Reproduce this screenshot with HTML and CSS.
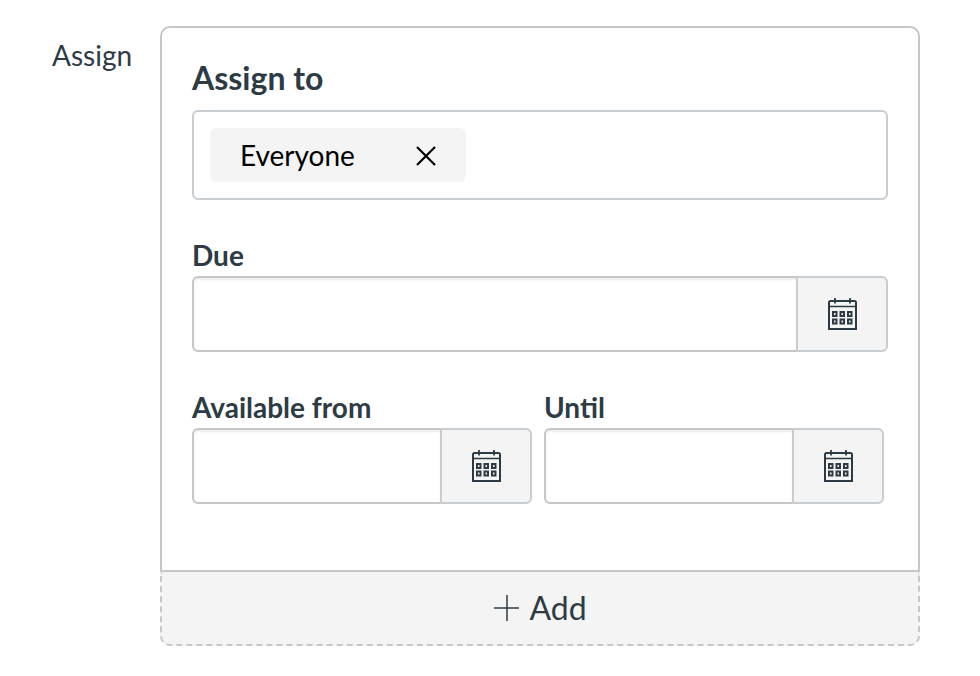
FILE: index.html
```html
<!DOCTYPE html>
<html lang="en">
<head>
    <meta charset="UTF-8">
    <meta name="viewport" content="width=device-width, initial-scale=1.0">
    <title>Assign</title>
    <link rel="stylesheet" href="styles.css">
</head>
<body>
    <svg class="sprite" aria-hidden="true">
        <symbol id="calendar" viewBox="0 0 30 32">
            <g fill="none" stroke="currentColor" stroke-width="2">
                <path d="M2 31V4.500Q2 3 3.500 3H27.500Q29 3 29 4.500V31Z"/>
                <path d="M2 8.500H29" stroke-width="1.500"/>
                <path d="M8 0V5.500M23 0V5.500" stroke-width="1.800"/>
                <path d="M6 14H9.500V18H6ZM13.500 14H17V18H13.500ZM21 14H24.500V18H21Z"/>
                <path d="M6 21.500H9.500V25.500H6ZM13.500 21.500H17V25.500H13.500ZM21 21.500H24.500V25.500H21Z"/>
            </g>
        </symbol>
    </svg>

    <form class="assign" aria-labelledby="assignTitle">
        <div class="assign-title" id="assignTitle">Assign</div>
        <div class="assign-content">
            <div class="card">
                <div class="field">
                    <div class="label label-large" id="assignToLabel">Assign to</div>
                    <div class="tokens" role="group" aria-labelledby="assignToLabel">
                        <div class="token">
                            <span>Everyone</span>
                            <button type="button" class="token-remove" aria-label="Remove Everyone">
                                <svg viewBox="0 0 20 20" width="20" height="20"><path d="M1 2L19 20M19 2L1 20" stroke="currentColor" stroke-width="2.2"/></svg>
                            </button>
                        </div>
                    </div>
                </div>

                <div class="field">
                    <label class="label" for="due">Due</label>
                    <div class="date">
                        <input type="text" id="due">
                        <button type="button" aria-label="Choose due date"><svg width="30" height="32"><use href="#calendar"/></svg></button>
                    </div>
                </div>

                <div class="date-row">
                    <div class="field">
                        <label class="label" for="from">Available from</label>
                        <div class="date">
                            <input type="text" id="from">
                            <button type="button" aria-label="Choose available from date"><svg width="30" height="32"><use href="#calendar"/></svg></button>
                        </div>
                    </div>
                    <div class="field">
                        <label class="label" for="until">Until</label>
                        <div class="date">
                            <input type="text" id="until">
                            <button type="button" aria-label="Choose until date"><svg width="30" height="32"><use href="#calendar"/></svg></button>
                        </div>
                    </div>
                </div>
            </div>
            <button type="button" class="add">
                <svg viewBox="0 0 26 26" width="26" height="26"><path d="M14 0V26M1 13H26" stroke="currentColor" stroke-width="1.5"/></svg>
                <span>Add</span>
            </button>
        </div>
    </form>
</body>
</html>
```
FILE: styles.css
```css
* {
    box-sizing: border-box;
}
body {
    margin: 0;
    padding: 26px 60px 30px 52px;
    background-color: #fff;
    color: #2d3b45;
    font-family: Lato, sans-serif;
    font-size: 28px;
    line-height: 38px;
}
button, input {
    font: inherit;
    color: inherit;
}
button {
    cursor: pointer;
}
svg {
    display: block;
    overflow: visible;
}
.sprite {
    display: none;
}
.assign {
    display: grid;
    grid-template-columns: 80px minmax(0, 1fr);
    gap: 28px;
}
.assign-title {
    padding-top: 10px;
}
.card {
    padding: 30px;
    border: 2px solid #c7c7c7;
    border-radius: 10px 10px 0 0;
}
.field {
    margin-bottom: 36px;
}
.label {
    display: block;
    margin-bottom: 2px;
    font-weight: bold;
}
.label-large {
    margin-bottom: 12px;
    font-size: 32px;
    line-height: 40px;
}
.tokens {
    display: flex;
    padding: 16px;
    border: 2px solid #c7cdd1;
    border-radius: 6px;
}
.token {
    display: flex;
    align-items: center;
    justify-content: space-between;
    width: 256px;
    height: 54px;
    padding: 0 30px;
    border-radius: 6px;
    background-color: #f4f4f4;
    color: #000;
}
.token-remove {
    padding: 0;
    border: none;
    background: none;
}
.date {
    display: flex;
    height: 76px;
}
.date input {
    flex: 1;
    width: 100%;
    min-width: 0;
    padding: 0 16px;
    border: 2px solid #c7c7c7;
    border-right: none;
    border-radius: 6px 0 0 6px;
    box-shadow: inset 0 2px 2px rgba(0, 0, 0, 0.07);
}
.date button {
    display: flex;
    flex-shrink: 0;
    align-items: center;
    justify-content: center;
    width: 92px;
    padding: 0;
    border: 2px solid #c7cdd1;
    border-radius: 0 6px 6px 0;
    background-color: #f4f4f4;
}
.date-row {
    display: grid;
    grid-template-columns: repeat(2, minmax(0, 1fr));
    gap: 12px;
    padding-right: 4px;
}
.add {
    display: flex;
    align-items: center;
    justify-content: center;
    gap: 10px;
    width: 100%;
    height: 74px;
    border: 2px dashed #c7c7c7;
    border-top: none;
    border-radius: 0 0 10px 10px;
    background-color: #f4f4f4;
    font-size: 32px;
}
```
